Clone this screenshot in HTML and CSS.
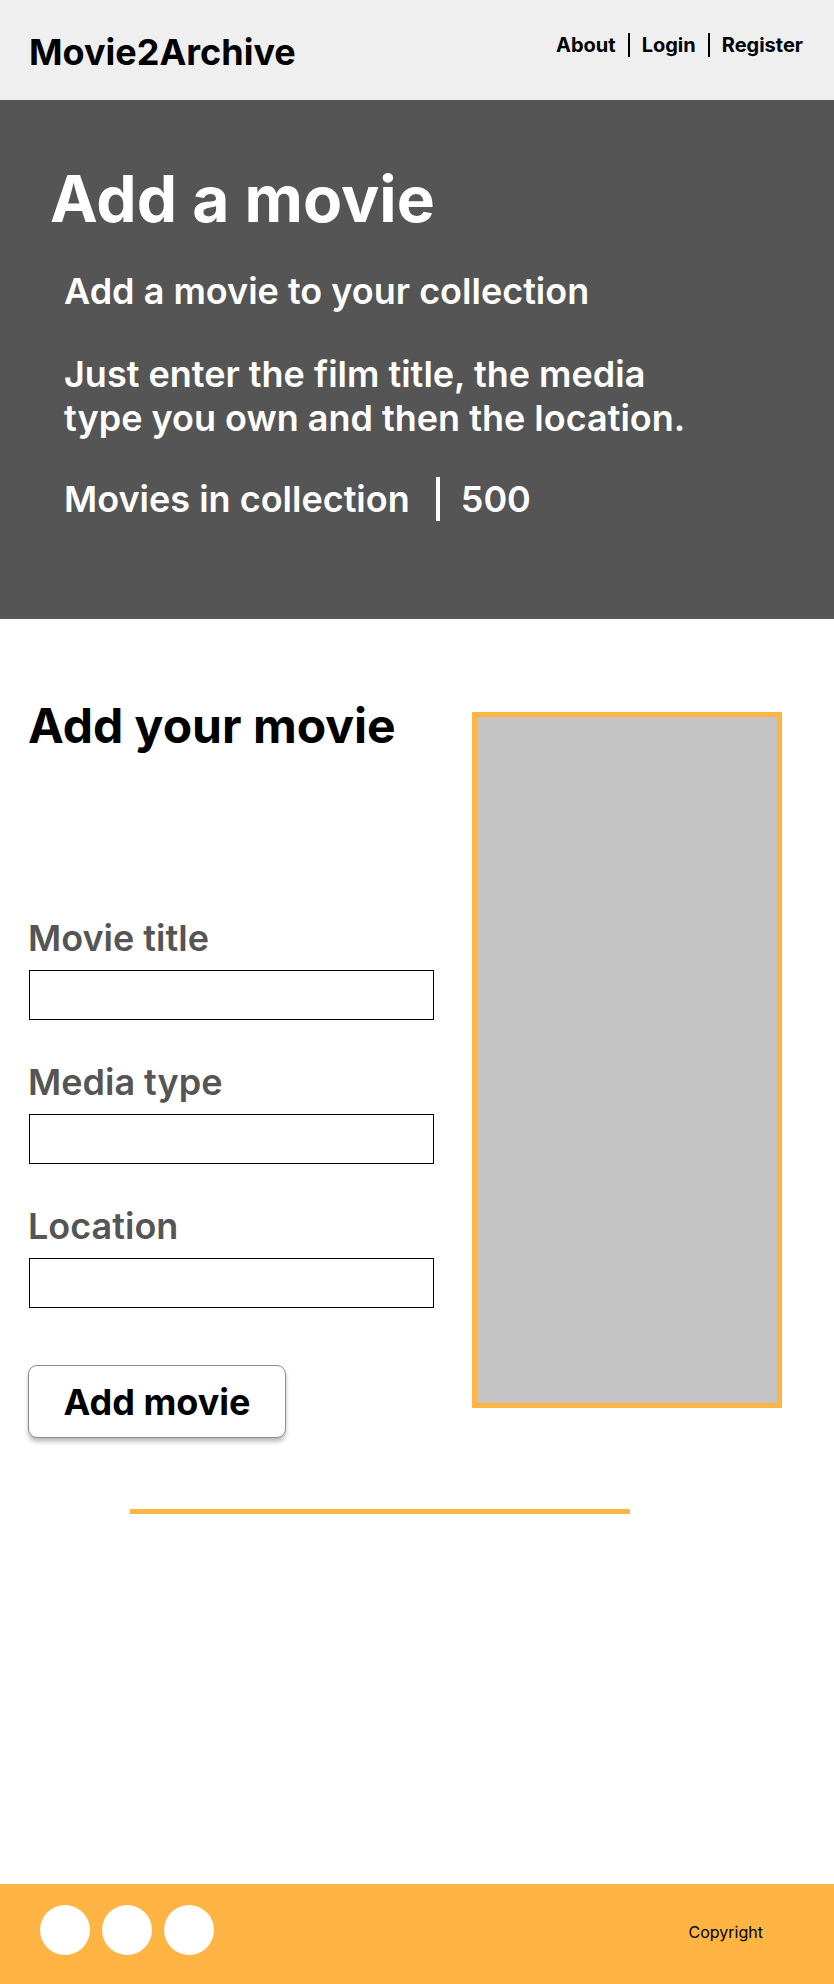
FILE: index.html
```html
<!DOCTYPE html>
<html lang="en">
<head>
<meta charset="utf-8">
<title>Movie2Archive - Add a movie</title>
<link rel="stylesheet" href="styles.css">
</head>
<body>
<header class="topbar">
  <div class="logo">Movie2Archive</div>
  <nav class="nav">
    <a class="nav-item" href="#">About</a>
    <a class="nav-item" href="#">Login</a>
    <a class="nav-item" href="#">Register</a>
  </nav>
</header>

<section class="hero">
  <h1 class="hero-title">Add a movie</h1>
  <p class="hero-sub">Add a movie to your collection</p>
  <p class="hero-text">Just enter the film title, the media type you own and then the location.</p>
  <div class="hero-count">
    <span class="count-label">Movies in collection</span>
    <span class="count-sep"></span>
    <span class="count-num">500</span>
  </div>
</section>

<main class="main">
  <div class="form-row">
    <form class="form-col">
      <h2 class="form-title">Add your movie</h2>
      <label class="field-label first" for="title">Movie title</label>
      <input class="field-input" id="title" type="text">
      <label class="field-label" for="media">Media type</label>
      <input class="field-input" id="media" type="text">
      <label class="field-label" for="location">Location</label>
      <input class="field-input" id="location" type="text">
      <button class="add-btn" type="button">Add movie</button>
    </form>
    <div class="poster"></div>
  </div>
  <div class="divider"></div>
</main>

<footer class="footer">
  <div class="socials">
    <span class="social"></span>
    <span class="social"></span>
    <span class="social"></span>
  </div>
  <div class="copyright">Copyright</div>
</footer>
</body>
</html>
```
FILE: styles.css
```css
* { box-sizing: border-box; }

html, body {
  margin: 0;
  padding: 0;
}

body {
  font-family: Inter, "Noto Sans", sans-serif;
  color: #000;
  background: #fff;
  min-height: 100vh;
  display: flex;
  flex-direction: column;
}

/* Header */
.topbar {
  height: 100px;
  background: #efefef;
  display: flex;
  justify-content: space-between;
  align-items: flex-start;
  padding: 0 31px 0 29px;
}

.logo {
  font-size: 36px;
  font-weight: 700;
  line-height: normal;
  margin-top: 30px;
}

.nav {
  display: flex;
  margin-top: 33px;
}

.nav-item {
  font-size: 20px;
  font-weight: 700;
  line-height: normal;
  color: #000;
  text-decoration: none;
}

.nav-item + .nav-item {
  border-left: 2px solid #000;
  margin-left: 12px;
  padding-left: 12px;
}

/* Hero */
.hero {
  background: #555555;
  color: #fff;
  padding: 60px 0 98px 0;
}

.hero-title {
  margin: 0 0 0 50px;
  font-size: 64px;
  font-weight: 700;
  line-height: normal;
}

.hero-sub,
.hero-text {
  margin: 0 0 0 64px;
  font-size: 36px;
  font-weight: 600;
  line-height: normal;
}

.hero-sub { margin-top: 32px; }

.hero-text {
  margin-top: 39px;
  max-width: 640px;
}

.hero-count {
  display: flex;
  align-items: stretch;
  margin: 37px 0 0 64px;
  font-size: 36px;
  font-weight: 600;
  line-height: normal;
}

.count-sep {
  width: 4px;
  background: #fff;
  margin: 0 21px 0 26px;
}

/* Main */
.main {
  padding-top: 77px;
}

.form-row {
  display: flex;
  align-items: flex-start;
}

.form-col {
  display: flex;
  flex-direction: column;
  align-items: flex-start;
  width: 434px;
  padding-left: 29px;
  margin: 0;
}

.form-title {
  margin: 0 0 0 -1px;
  font-size: 48px;
  font-weight: 700;
  line-height: normal;
}

.field-label {
  font-size: 36px;
  font-weight: 600;
  color: #555555;
  line-height: normal;
  margin: 40px 0 10px -1px;
}

.field-label.first { margin-top: 161px; }

.field-input {
  width: 405px;
  height: 50px;
  border: 1px solid #000;
  border-radius: 0;
  background: #fff;
  margin: 0;
  padding: 0 8px;
  font: inherit;
  font-size: 18px;
}

.add-btn {
  margin-top: 57px;
  margin-left: -1px;
  width: 258px;
  height: 73px;
  background: #fff;
  border: 1px solid #8c8c8c;
  border-radius: 9px;
  box-shadow: 0 4px 4px rgba(0, 0, 0, 0.25);
  font-family: Inter, "Noto Sans", sans-serif;
  font-size: 36px;
  font-weight: 700;
  color: #000;
  padding: 0;
  cursor: pointer;
}

.poster {
  width: 310px;
  height: 696px;
  margin: 16px 0 0 38px;
  background: #c4c4c4;
  border: 5px solid #ffb443;
}

.divider {
  width: 500px;
  height: 5px;
  background: #ffb443;
  margin: 71px 0 0 130px;
}

/* Footer */
.footer {
  margin-top: auto;
  height: 100px;
  background: #ffb443;
  display: flex;
  align-items: flex-start;
  padding: 21px 71px 0 40px;
}

.socials {
  display: flex;
  gap: 12px;
}

.social {
  width: 50px;
  height: 50px;
  border-radius: 50%;
  background: #fff;
}

.copyright {
  margin-left: auto;
  margin-top: 17px;
  font-size: 16px;
  font-weight: 400;
  line-height: normal;
  color: #000;
}
```
